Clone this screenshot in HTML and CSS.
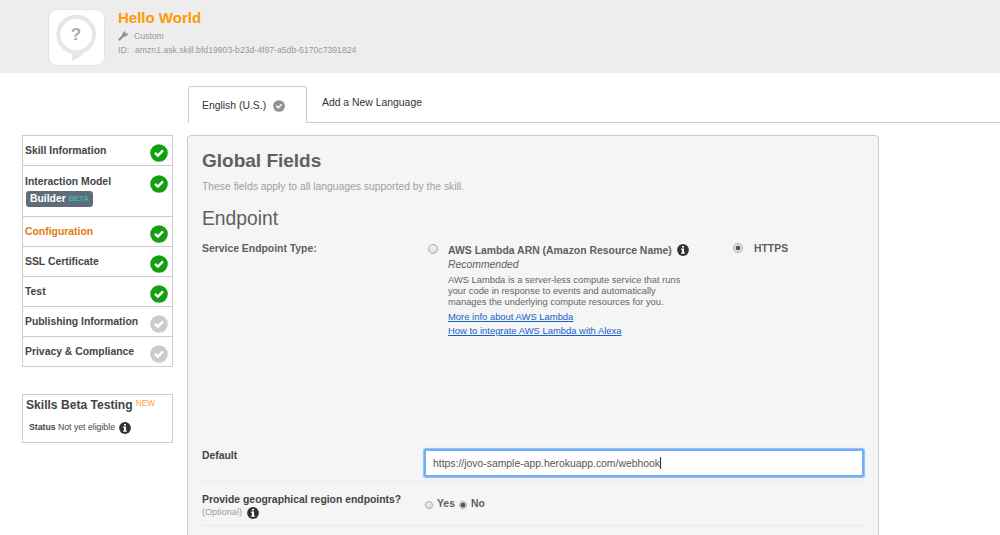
FILE: index.html
```html
<!DOCTYPE html>
<html lang="en">
<head>
<meta charset="utf-8">
<title>Hello World - Configuration</title>
<link rel="stylesheet" href="styles.css">
</head>
<body>
<svg class="defs" aria-hidden="true">
  <symbol id="check" viewBox="0 0 18 18"><circle cx="9" cy="9" r="8.8" fill="currentColor"/><path d="M5 8.800 7.900 11.600 13 6.300" fill="none" stroke="#fff" stroke-width="2.400"/></symbol>
  <symbol id="info" viewBox="0 0 12 12"><circle cx="6" cy="6" r="5.900" fill="currentColor"/><path d="M5 1.900h2v1.700H5zM4.200 4.600H7v3.900h.8v1.300H4.200V8.500H5V5.900h-.8z" fill="#fff"/></symbol>
</svg>
<header class="top">
  <div class="logo">
    <svg width="55" height="55" viewBox="0 0 55 55"><path d="M23 42v8.800q7-2.500 12-8.800z" fill="#e6e6e6"/><circle cx="27.200" cy="24.600" r="17.800" fill="#fff" stroke="#e6e6e6" stroke-width="4"/></svg>
    <span class="mark">?</span>
  </div>
  <div class="skill">
    <h1 class="title">Hello World</h1>
    <div class="meta"><svg class="wrench" viewBox="0 0 10 10"><path d="M1.500 8.500 6 4" stroke="#919191" stroke-width="2.300" stroke-linecap="round"/><path d="M8.900 1.200 7.300 2.800 6.900 2.400 8.100.6A3 3 0 0 0 4.400 4.200 3 3 0 0 0 9.700 3.700Q10 2.800 9.500 1.900L7.800 3.100 7 2.600z" fill="#919191"/></svg><span class="kind">Custom</span></div>
    <div class="meta idline"><span class="idlabel">ID:</span><span class="id">amzn1.ask.skill.bfd19903-b23d-4f87-a5db-6170c7391824</span></div>
  </div>
</header>
<div class="page">
  <aside class="side">
    <nav class="steps">
      <a class="step"><span>Skill Information</span><svg class="check"><use href="#check"/></svg></a>
      <a class="step tall"><span>Interaction Model<b class="builder">Builder <i class="beta">BETA</i></b></span><svg class="check"><use href="#check"/></svg></a>
      <a class="step current"><span>Configuration</span><svg class="check"><use href="#check"/></svg></a>
      <a class="step"><span>SSL Certificate</span><svg class="check"><use href="#check"/></svg></a>
      <a class="step"><span>Test</span><svg class="check"><use href="#check"/></svg></a>
      <a class="step"><span>Publishing Information</span><svg class="check off"><use href="#check"/></svg></a>
      <a class="step"><span>Privacy &amp; Compliance</span><svg class="check off"><use href="#check"/></svg></a>
    </nav>
    <section class="betabox">
      <div class="bt"><span class="btname">Skills Beta Testing</span><span class="new">NEW</span></div>
      <div class="status"><span class="stext"><b>Status</b> Not yet eligible</span><svg class="info"><use href="#info"/></svg></div>
    </section>
  </aside>
  <main class="content">
    <div class="tabs">
      <div class="tab active"><span class="tabname">English (U.S.)</span><svg class="tabcheck"><use href="#check"/></svg></div>
      <div class="tab more"><span class="addlang">Add a New Language</span></div>
    </div>
    <section class="panel">
      <h2 class="global">Global Fields</h2>
      <p class="sub"><span>These fields apply to all languages supported by the skill.</span></p>
      <h3 class="endpoint">Endpoint</h3>
      <div class="row types">
        <div class="label"><span class="lbl">Service Endpoint Type:</span></div>
        <span class="radio r1"></span>
        <div class="lambda">
          <div class="arn"><span class="arntext">AWS Lambda ARN (Amazon Resource Name)</span><svg class="info"><use href="#info"/></svg></div>
          <div class="rec"><span>Recommended</span></div>
          <p class="desc"><span>AWS Lambda is a server-less compute service that runs</span><br>your code in response to events and automatically<br>manages the underlying compute resources for you.</p>
          <a class="link">More info about AWS Lambda</a>
          <a class="link">How to integrate AWS Lambda with Alexa</a>
        </div>
        <span class="radio on r2"></span>
        <span class="https">HTTPS</span>
      </div>
      <div class="row default">
        <div class="label dark">Default</div>
        <div class="field"><span class="url">https://jovo-sample-app.herokuapp.com/webhook</span><span class="caret"></span></div>
      </div>
      <div class="row geo">
        <div class="label dark"><span class="geotext">Provide geographical region endpoints?</span><div class="opt"><span>(Optional)</span><svg class="info"><use href="#info"/></svg></div></div>
        <div class="choice"><span class="radio small"></span><span class="yes">Yes</span><span class="radio small on"></span><span>No</span></div>
      </div>
    </section>
  </main>
</div>
</body>
</html>
```
FILE: styles.css
```css
* { box-sizing: border-box; }
body { margin: 0; height: 535px; overflow: hidden; background: #fff; color: #444; font-family: "Liberation Sans", Arial, sans-serif; white-space: nowrap; }
h1, h2, h3, p { margin: 0; }
svg { display: block; flex: none; }
.defs { position: absolute; width: 0; height: 0; }
.top { display: flex; height: 73px; padding: 9px 0 0 48px; background: #ededed; }
.logo { position: relative; width: 57px; height: 57px; border: 1px solid #e4e4e4; border-radius: 9px; background: #fff; }
.mark { position: absolute; left: 0; top: 14px; width: 54px; text-align: center; font: bold 17px/22px "Liberation Sans", sans-serif; color: #aaa; }
.skill { padding-left: 13px; }
.title { font-size: 15px; line-height: 17px; color: #ff9900; }
.meta { display: flex; height: 13px; margin-top: 3px; align-items: center; font-size: 8.660px; color: #999; }
.wrench { width: 10px; height: 10px; margin-right: 6px; }
.idline { margin-top: 1px; }
.idlabel { width: 17px; }
.page { display: flex; height: 462px; }
.side { width: 187px; padding: 62px 0 0 22px; }
.steps { width: 151px; border: 1px solid #ccc; border-bottom: 0; }
.step { display: flex; justify-content: space-between; height: 30px; padding: 7px 4px 0 2px; border-bottom: 1px solid #ccc; font-size: 10.4px; line-height: 15px; font-weight: bold; }
.step.tall { height: 51px; padding-top: 8px; }
.current { color: #e47911; }
.check { width: 18px; height: 18px; margin-top: 1px; color: #12a012; }
.off { color: #ccc; }
.builder { display: block; width: 67px; height: 16px; margin: 2px 0 0 1px; padding-left: 4px; border-radius: 3px; background: #5f6d7b; color: #fff; font-size: 10.4px; line-height: 15px; }
.beta { font-style: normal; font-weight: normal; font-size: 7.900px; color: #2cd0c6; vertical-align: 1px; }
.betabox { width: 151px; height: 49px; margin-top: 27px; padding: 2px 3px; border: 1px solid #ccc; }
.bt { display: flex; font-size: 12.100px; line-height: 17px; font-weight: bold; }
.new { margin-left: 3px; font-size: 8.300px; line-height: 12px; font-weight: normal; color: #ff9f2e; }
.status { display: flex; align-items: center; margin: 7px 0 0 3px; font-size: 8.700px; line-height: 13px; gap: 4px; }
.info { width: 12px; height: 12px; color: #333; }
.content { width: 813px; padding-top: 13px; }
.tabs { display: flex; height: 37px; padding-left: 1px; font-size: 10.4px; color: #333; }
.tab { display: flex; align-items: center; }
.active { width: 119px; padding: 1px 0 0 13px; border: 1px solid #ccc; border-bottom: 0; border-radius: 3px 3px 0 0; gap: 7px; }
.tabcheck { width: 12px; height: 12px; color: #929292; }
.more { flex: 1; padding: 0 0 3px 15px; border-bottom: 1px solid #ccc; }
.panel { width: 692px; height: 420px; margin-top: 12px; padding: 13px 14px 0; border: 1px solid #ccc; border-radius: 4px 4px 0 0; background: #f5f5f5; color: #606060; }
.global { font-size: 19px; line-height: 24px; }
.sub { margin-top: 6px; font-size: 10.370px; line-height: 16px; color: #a0a0a0; }
.endpoint { margin-top: 12px; font-size: 19.300px; line-height: 24px; font-weight: normal; }
.row { display: flex; align-items: flex-start; font-size: 10.4px; }
.label { width: 222px; line-height: 13px; font-weight: bold; }
.types { height: 199px; padding-top: 11px; }
.dark { color: #444; }
.radio { flex: none; width: 10px; height: 10px; border: 1px solid #aaa; border-radius: 50%; background: linear-gradient(#f2f2f2, #dcdcdc); }
.on { background: radial-gradient(circle, #555 0 2px, #e9e9e9 2.800px); }
.r1 { margin: 2px 0 0 4px; }
.lambda { width: 295px; padding: 1px 0 0 10px; }
.arn { display: flex; align-items: center; gap: 5px; height: 14px; font-size: 10.430px; font-weight: bold; }
.rec { font-style: italic; line-height: 15px; }
.desc { margin-top: 3px; font-size: 9.350px; line-height: 11px; color: #666; }
.link { display: block; width: max-content; margin-top: 0; font-size: 9.430px; line-height: 14px; color: #1560c8; text-decoration: underline; }
.desc + .link { margin-top: 2px; }
.r2 { margin-top: 1px; }
.https { margin-left: 11px; font-weight: bold; line-height: 13px; }
.default { height: 52px; padding-top: 19px; border-bottom: 1px solid #ebebeb; }
.field { display: flex; align-items: center; width: 440px; height: 28px; padding: 0 0 0 7px; border: 2px solid #74aef5; border-radius: 2px; background: #fff; box-shadow: 0 0 1px 0.500px #8fbdf7; color: #555; }
.caret { width: 1px; height: 12px; background: #333; }
.geo { height: 44px; padding-top: 11px; border-bottom: 1px solid #ebebeb; }
.opt { display: flex; gap: 5px; align-items: center; font-size: 9.100px; font-weight: normal; color: #a0a0a0; }
.choice { display: flex; align-items: center; padding: 5px 0 0 1px; line-height: 12px; font-weight: bold; gap: 4px; }
.small { width: 8px; height: 8px; margin-top: 2px; }
```
